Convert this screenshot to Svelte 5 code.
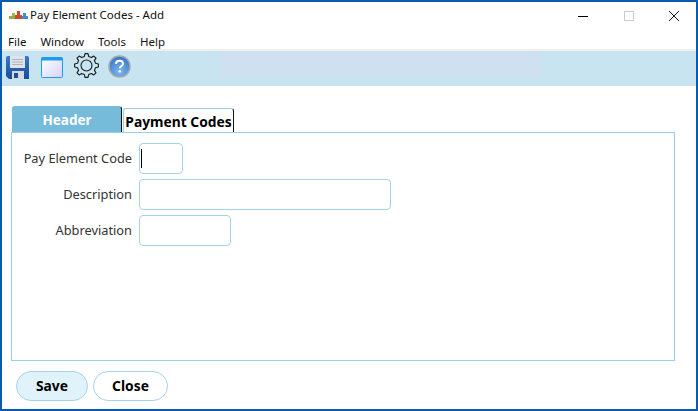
<script lang="ts">
  const menus = ["File", "Window", "Tools", "Help"];
  const fields = [
    { label: "Pay Element Code", size: "code", caret: true },
    { label: "Description", size: "desc", caret: false },
    { label: "Abbreviation", size: "abbr", caret: false },
  ];

  // eight-toothed outline for the settings icon
  function gearPath(teeth: number, outer: number, inner: number, c: number) {
    const step = (Math.PI * 2) / teeth;
    let d = "";
    for (let i = 0; i < teeth; i++) {
      const a = i * step - Math.PI / 2;
      const pts = [
        [inner, a - step * 0.3],
        [outer, a - step * 0.16],
        [outer, a + step * 0.16],
        [inner, a + step * 0.3],
      ];
      for (const [r, t] of pts) {
        const x = (c + r * Math.cos(t)).toFixed(2);
        const y = (c + r * Math.sin(t)).toFixed(2);
        d += `${d ? "L" : "M"}${x} ${y}`;
      }
    }
    return d + "Z";
  }
</script>

<div class="window">
  <header class="titlebar">
    <svg class="logo" width="20" height="10" viewBox="0 0 20 10">
      <rect x="0" y="6" width="6" height="3" fill="#8db04a" />
      <rect x="3" y="3" width="3" height="3" fill="#a8b84e" />
      <rect x="6" y="5" width="7" height="4" fill="#d0492f" />
      <rect x="8" y="1" width="3" height="4" fill="#d0492f" />
      <rect x="13" y="6" width="6" height="3" fill="#3f8fc4" />
      <rect x="14" y="3" width="3" height="3" fill="#3f8fc4" />
    </svg>
    <span class="title">Pay Element Codes - Add</span>
    <div class="controls">
      <svg width="45" height="12" viewBox="0 0 45 12"><path d="M17 6.500h10" stroke="#000" /></svg>
      <svg width="45" height="12" viewBox="0 0 45 12"><rect x="18.500" y="1.500" width="9" height="9" fill="none" stroke="#ccc" /></svg>
      <svg width="45" height="12" viewBox="0 0 45 12"><path d="M18 1l10 10M28 1L18 11" stroke="#111" /></svg>
    </div>
  </header>

  <nav class="menubar">
    {#each menus as menu}
      <span>{menu}</span>
    {/each}
  </nav>

  <div class="toolbar">
    <div class="icons">
      <svg class="save" width="23" height="23" viewBox="0 0 23 23">
        <defs>
          <linearGradient id="disk" x1="0" y1="0" x2="0" y2="1">
            <stop offset="0" stop-color="#3a78c8" />
            <stop offset="1" stop-color="#174c9e" />
          </linearGradient>
        </defs>
        <path d="M0 2a2 2 0 0 1 2-2h19a2 2 0 0 1 2 2v21H3l-3-3z" fill="url(#disk)" />
        <rect x="4" y="0" width="15" height="12" fill="#e0e3e8" />
        <path d="M6 3.500h11M6 6h11M6 8.500h11" stroke="#b0b6c0" />
        <rect x="6" y="15" width="12" height="8" fill="#d5d9df" />
        <rect x="8" y="17" width="4" height="5" fill="#1c4f96" />
      </svg>
      <svg class="pane" width="23" height="22" viewBox="0 0 23 22">
        <defs>
          <linearGradient id="pane" x1="0" y1="0" x2="1" y2="1">
            <stop offset="0" stop-color="#fff" />
            <stop offset="1" stop-color="#d4d4fa" />
          </linearGradient>
        </defs>
        <rect x=".5" y=".5" width="21" height="20" rx="1" fill="url(#pane)" stroke="#1e9bf0" />
        <rect x=".5" y=".5" width="21" height="3" fill="#1e9bf0" />
      </svg>
      <svg class="gear" width="25" height="25" viewBox="0 0 25 25">
        <path d={gearPath(8, 12, 9.3, 12.5)} fill="none" stroke="#1a1a1a" stroke-width="1.100" stroke-linejoin="round" />
        <circle cx="12.500" cy="12.500" r="5.500" fill="none" stroke="#1a1a1a" stroke-width="1.100" />
      </svg>
      <svg class="help" width="23" height="23" viewBox="0 0 23 23">
        <defs>
          <radialGradient id="ball" cx=".5" cy=".75" r=".8">
            <stop offset="0" stop-color="#7db8ee" />
            <stop offset="1" stop-color="#2f6fc4" />
          </radialGradient>
        </defs>
        <circle cx="11.500" cy="11.500" r="10.500" fill="url(#ball)" stroke="#a3a8ad" stroke-width="1.500" />
        <path d="M8 9c0-2 1.500-3.200 3.600-3.200S15 7 15 8.700c0 2.300-3.200 2.500-3.200 4.500" fill="none" stroke="#fff" stroke-width="2" />
        <circle cx="11.800" cy="16.300" r="1.300" fill="#fff" />
      </svg>
    </div>
    <div class="stripe"></div>
  </div>

  <main class="content">
    <div class="tabs">
      <div class="tab active">Header</div>
      <div class="tab">Payment Codes</div>
    </div>
    <section class="panel">
      {#each fields as field}
        <div class="row">
          <span class="label">{field.label}</span>
          <div class="field {field.size}">
            {#if field.caret}<i class="caret"></i>{/if}
          </div>
        </div>
      {/each}
    </section>
  </main>

  <footer class="actions">
    <button class="primary">Save</button>
    <button class="close">Close</button>
  </footer>
</div>

<style>
  :global(body) {
    margin: 0;
    background: #fff;
  }

  .window {
    box-sizing: border-box;
    width: 698px;
    height: 411px;
    border: 2px solid #0a5aad;
    display: flex;
    flex-direction: column;
    font-family: "Noto Sans", "Open Sans", sans-serif;
    font-size: 12.800px;
    color: #111;
    overflow: hidden;
  }

  .titlebar {
    height: 28px;
    display: flex;
    align-items: center;
    padding-left: 7px;
    flex: none;
  }

  .logo {
    margin-right: 1px;
    margin-top: -3px;
  }

  .title {
    font-size: 11.500px;
    margin-top: -3px;
  }

  .controls {
    margin-left: auto;
    margin-top: -1px;
    display: flex;
  }

  .menubar {
    height: 19px;
    display: flex;
    gap: 14px;
    padding-left: 6px;
    align-items: center;
    flex: none;
    font-size: 11.500px;
    padding-top: 3px;
    box-sizing: border-box;
  }

  .toolbar {
    height: 37px;
    flex: none;
    background: #c8e4f0;
    border-top: 2px solid #f0f0f0;
    box-sizing: border-box;
    display: flex;
    position: relative;
  }

  .icons {
    display: flex;
    align-items: flex-start;
    padding-left: 4px;
  }

  .icons svg {
    flex: none;
  }

  .save {
    margin: 5px 12px 0 0;
  }

  .pane {
    margin: 6px 10px 0 0;
  }

  .gear {
    margin: 2px 9px 0 0;
  }

  .help {
    margin: 4px 0 0 0;
  }

  .stripe {
    position: absolute;
    left: 218px;
    top: 0;
    width: 320px;
    height: 25px;
    background: #cfe0f0;
  }

  .content {
    flex: 1;
    padding: 20px 21px 0 9px;
    display: flex;
    flex-direction: column;
  }

  .tabs {
    display: flex;
    align-items: flex-end;
    padding-left: 1px;
    gap: 1px;
    height: 27px;
    flex: none;
    margin-bottom: -1px;
  }

  .tab {
    box-sizing: border-box;
    width: 111px;
    height: 25px;
    border: 1px solid #99cfe8;
    border-bottom: none;
    border-right: 1px solid #111;
    border-radius: 3px 3px 0 0;
    text-align: center;
    line-height: 26px;
    font-weight: 700;
    font-size: 13.800px;
    color: #000;
    background: #fff;
    white-space: nowrap;
  }

  .tab.active {
    width: 110px;
    height: 27px;
    background: #77bbdb;
    border-color: #77bbdb;
    border-right-color: #111;
    color: #fff;
    line-height: 27px;
    font-size: 13.500px;
  }

  .panel {
    flex: 1;
    border: 1px solid #99cfe8;
    padding: 10px 0 0;
    display: flex;
    flex-direction: column;
    gap: 5px;
  }

  .row {
    display: flex;
    align-items: center;
    gap: 7px;
  }

  .label {
    width: 120px;
    text-align: right;
    color: #333;
    white-space: nowrap;
    margin-top: -2px;
  }

  .field {
    box-sizing: border-box;
    height: 31px;
    border: 1px solid #a6d2e8;
    border-radius: 4px;
    background: #fff;
    position: relative;
  }

  .code {
    width: 44px;
  }

  .desc {
    width: 252px;
  }

  .abbr {
    width: 92px;
  }

  .caret {
    position: absolute;
    left: 1px;
    top: 5px;
    width: 1px;
    height: 19px;
    background: #000;
  }

  .actions {
    height: 48px;
    flex: none;
    display: flex;
    gap: 5px;
    padding: 10px 0 0 14px;
    box-sizing: border-box;
  }

  button {
    box-sizing: border-box;
    height: 30px;
    border: 1px solid #a6d2e8;
    border-radius: 15px;
    background: #fff;
    font-family: inherit;
    font-size: 13.800px;
    font-weight: 700;
    color: #000;
    padding: 0 0 2px;
  }

  .primary {
    width: 72px;
    background: #e0f2fa;
  }

  .close {
    width: 75px;
  }
</style>
